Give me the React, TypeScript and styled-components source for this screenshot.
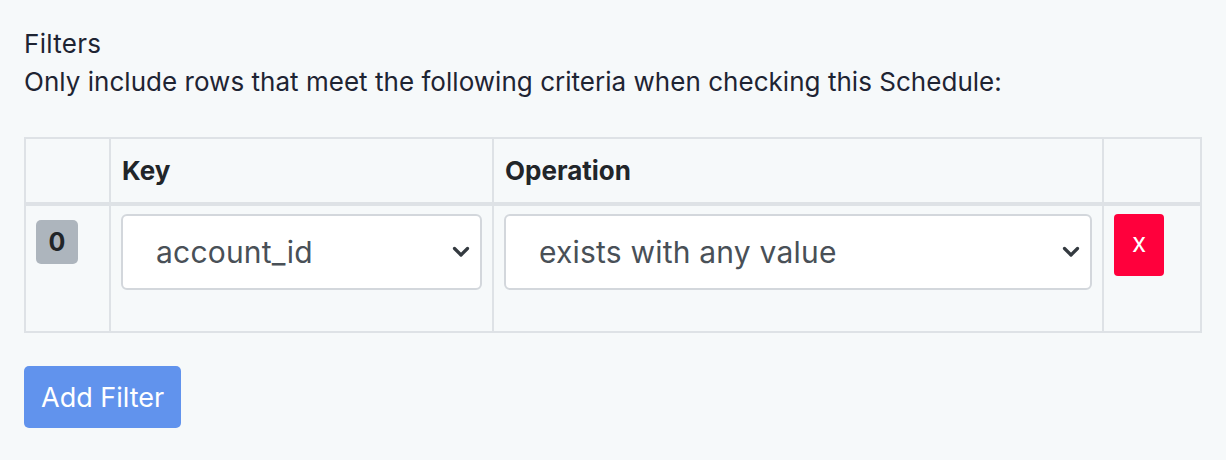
import React from 'react';
import styled, { createGlobalStyle } from 'styled-components';

const GlobalStyle = createGlobalStyle`
  html, body {
    margin: 0;
    padding: 0;
    background-color: #f6f9fa;
  }
  body {
    font-family: Inter, "Open Sans", "Liberation Sans", sans-serif;
    color: #1e2433;
  }
`;

const Page = styled.div`
  padding: 25px 24px 32px 24px;
  width: 1176px;
`;

const Title = styled.div`
  font-size: 26px;
  line-height: 38px;
  letter-spacing: 0.3px;
`;

const Description = styled.div`
  font-size: 26px;
  line-height: 38px;
  letter-spacing: 0.03px;
  margin-bottom: 36px;
`;

const Table = styled.table`
  width: 100%;
  border-collapse: collapse;
  table-layout: fixed;
`;

const HeadCell = styled.th<{ width: number }>`
  width: ${p => p.width}px;
  box-sizing: border-box;
  height: 66px;
  padding: 0 11px;
  text-align: left;
  font-size: 26px;
  font-weight: 700;
  color: #212529;
  border: 2px solid #dee2e6;
  border-bottom-width: 4px;
`;

const Cell = styled.td`
  vertical-align: top;
  padding: 8px 10px 41px 10px;
  border: 2px solid #dee2e6;
`;

const Badge = styled.span`
  display: inline-flex;
  align-items: center;
  justify-content: center;
  margin: 6px 0 0 0;
  width: 42px;
  height: 44px;
  border-radius: 5px;
  background-color: #adb5bd;
  color: #212529;
  font-size: 25px;
  font-weight: 700;
`;

const SelectWrap = styled.div`
  position: relative;
  height: 76px;
  box-sizing: border-box;
  border: 2px solid #d3d7dc;
  border-radius: 6px;
  background: #ffffff;
  display: flex;
  align-items: center;
  padding-left: 33px;
  font-size: 30px;
  letter-spacing: 0.2px;
  color: #495057;
`;

const Chevron = styled.svg`
  position: absolute;
  right: 10px;
  top: 50%;
  margin-top: -6px;
`;

const RemoveButton = styled.button`
  width: 50px;
  height: 62px;
  border: none;
  border-radius: 4px;
  background-color: #ff003c;
  color: #ffffff;
  font-family: inherit;
  font-size: 26px;
  padding: 0 0 6px 0;
  cursor: pointer;
`;

const AddButton = styled.button`
  margin-top: 33px;
  height: 62px;
  padding: 0 17px;
  border: none;
  border-radius: 5px;
  background-color: #6193ed;
  color: #ffffff;
  font-family: inherit;
  font-size: 27px;
  cursor: pointer;
`;

const Select: React.FC<{ value: string }> = ({ value }) => (
  <SelectWrap>
    {value}
    <Chevron width="18" height="12" viewBox="0 0 18 12">
      <path d="M2.5 2.5 L9 9 L15.5 2.5" fill="none" stroke="#343a40" strokeWidth="3.2" strokeLinecap="round" strokeLinejoin="round" />
    </Chevron>
  </SelectWrap>
);

export default function App() {
  return (
    <>
      <GlobalStyle />
      <Page>
        <Title>Filters</Title>
        <Description>Only include rows that meet the following criteria when checking this Schedule:</Description>
        <Table>
          <thead>
            <tr>
              <HeadCell width={85} />
              <HeadCell width={383}>Key</HeadCell>
              <HeadCell width={610}>Operation</HeadCell>
              <HeadCell width={98} />
            </tr>
          </thead>
          <tbody>
            <tr>
              <Cell><Badge>0</Badge></Cell>
              <Cell><Select value="account_id" /></Cell>
              <Cell><Select value="exists with any value" /></Cell>
              <Cell><RemoveButton>x</RemoveButton></Cell>
            </tr>
          </tbody>
        </Table>
        <AddButton>Add Filter</AddButton>
      </Page>
    </>
  );
}
